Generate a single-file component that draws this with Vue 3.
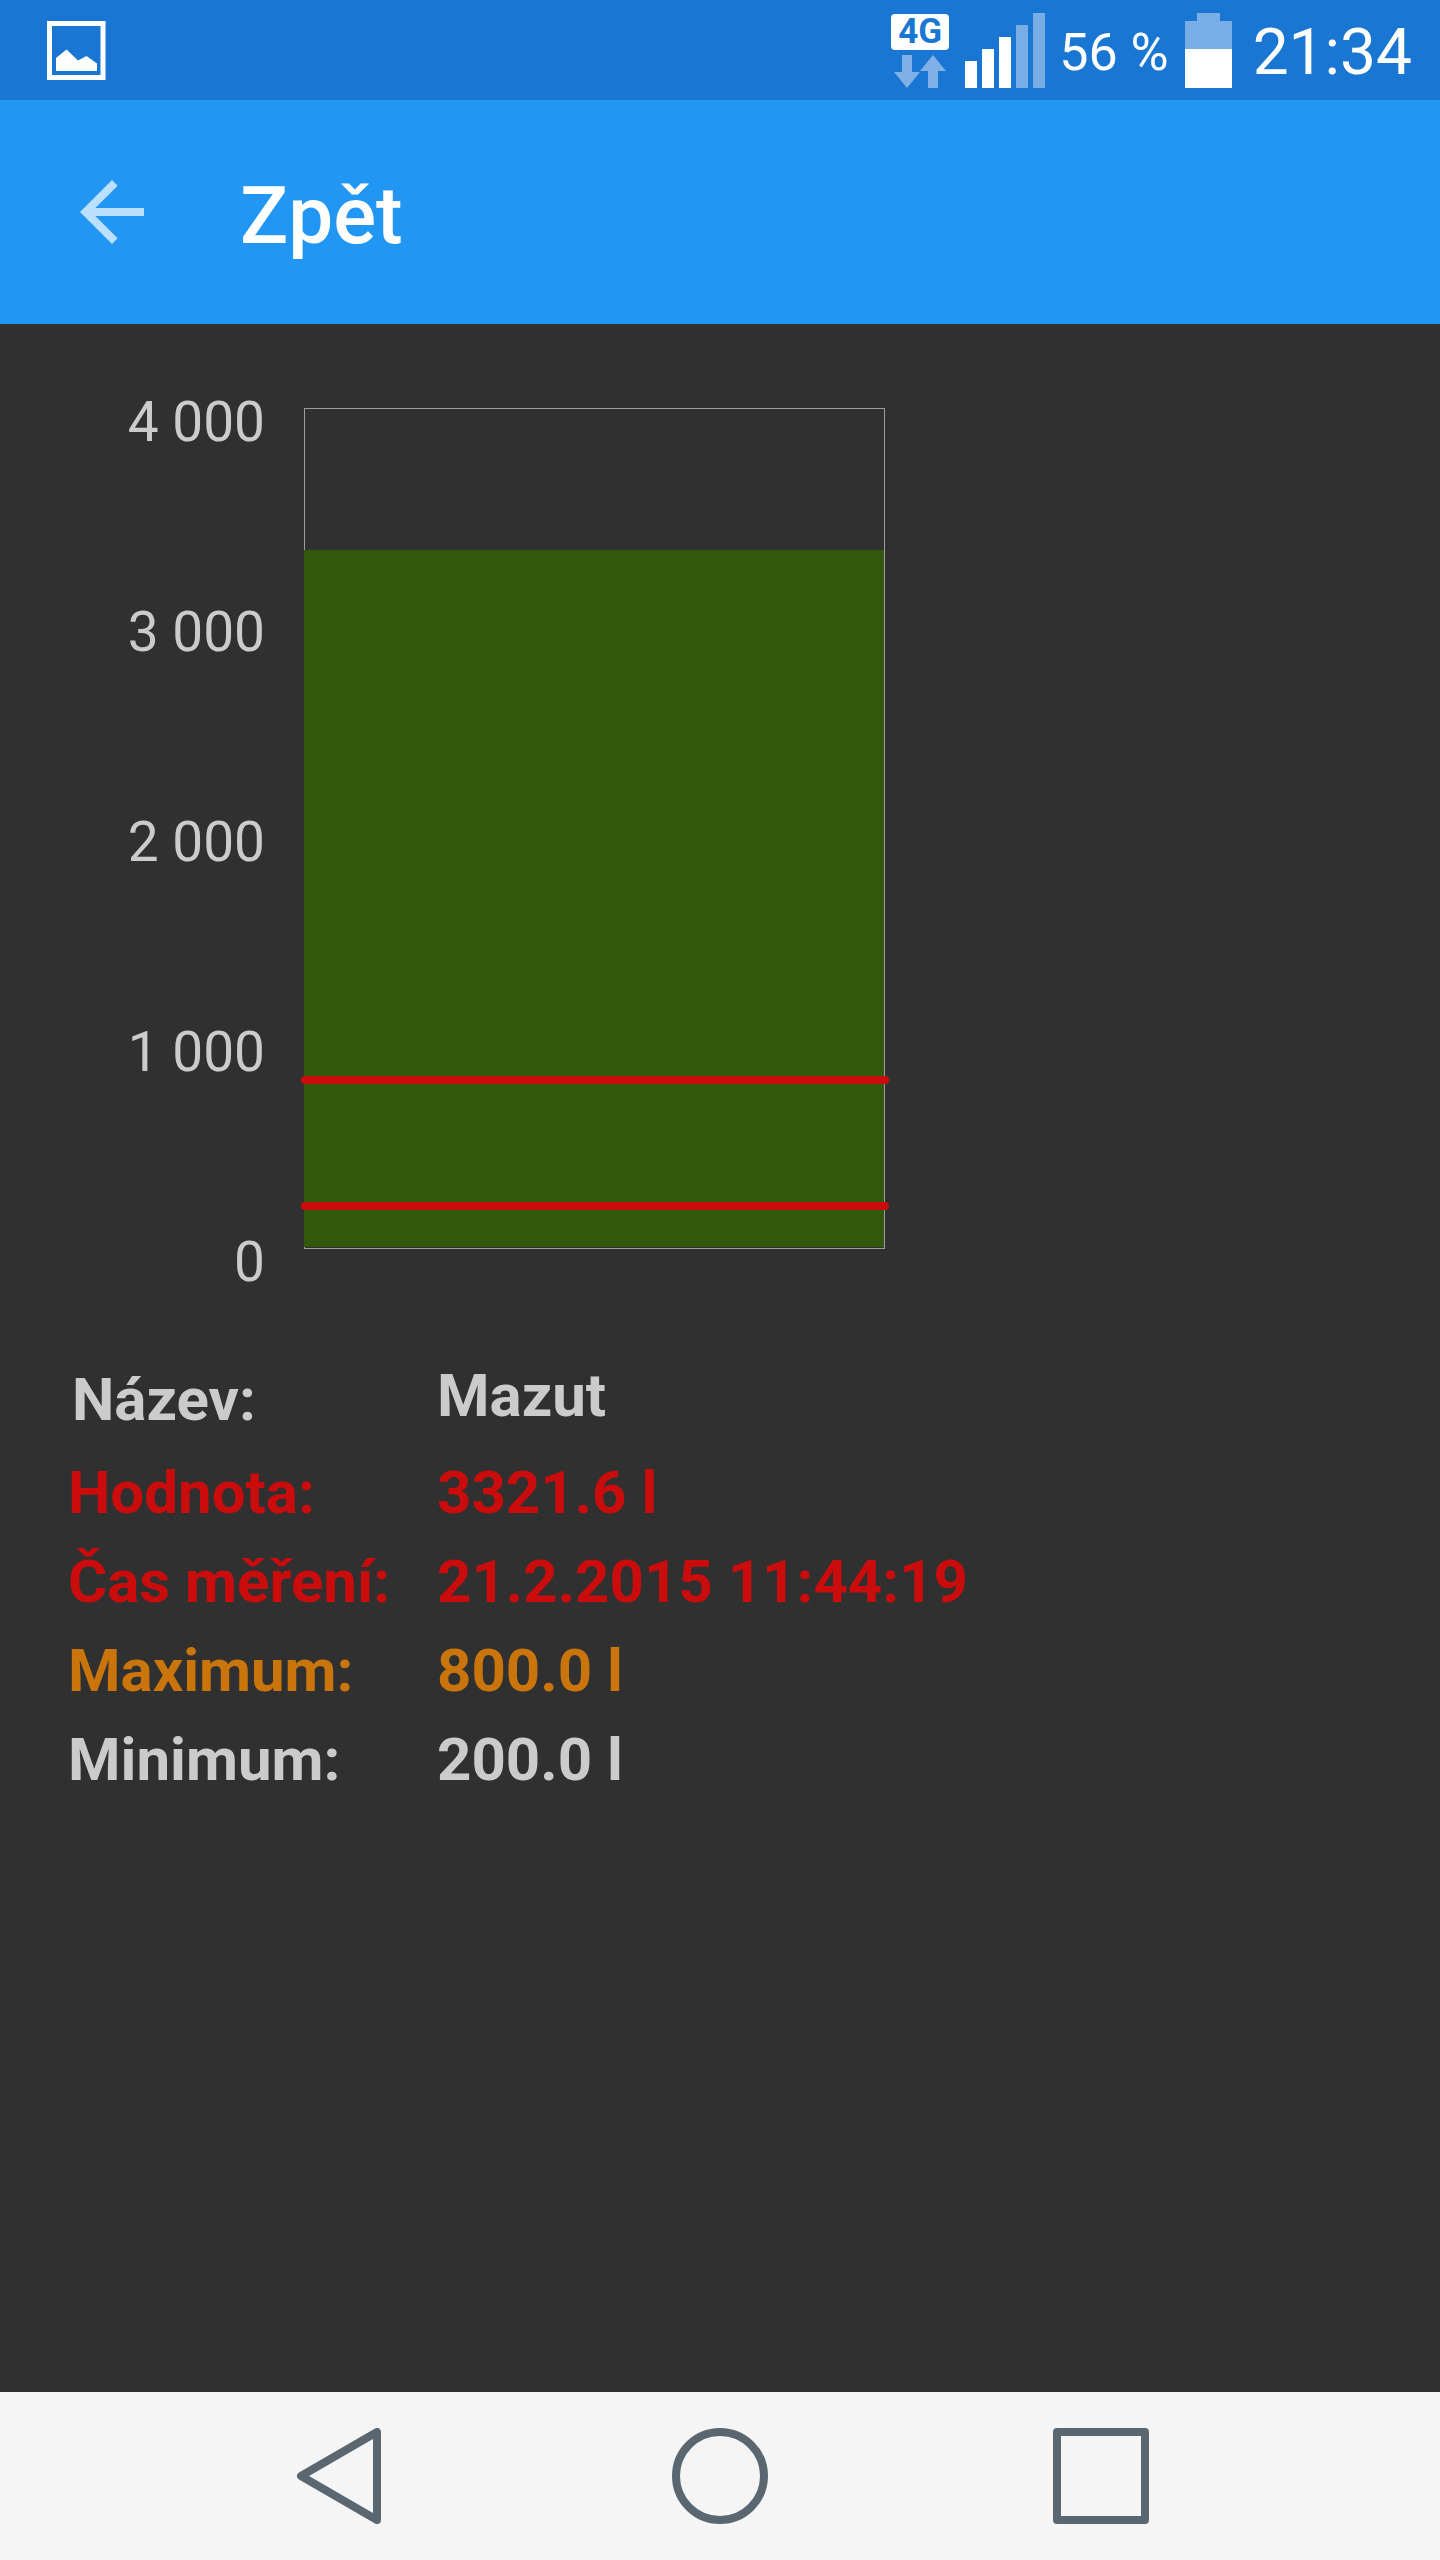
<script setup>
const scaleMax = 4000
const ticks = ['4 000', '3 000', '2 000', '1 000', '0']
const level = 3321.6
const limits = [800, 200]

const fromTop = (value) => `${(1 - value / scaleMax) * 100}%`

const rows = [
  { label: 'Název:', value: 'Mazut', tone: 'name' },
  { label: 'Hodnota:', value: '3321.6 l', tone: 'alert' },
  { label: 'Čas měření:', value: '21.2.2015 11:44:19', tone: 'alert' },
  { label: 'Maximum:', value: '800.0 l', tone: 'warn' },
  { label: 'Minimum:', value: '200.0 l', tone: 'plain' },
]
</script>

<template>
  <div class="screen">
    <div class="status">
      <svg class="picture" width="59" height="59" viewBox="0 0 59 59" aria-hidden="true">
        <path d="M2.5 2.5H56V56.5H2.5Z" fill="none" stroke="#fff" stroke-width="5" />
        <path d="M9 37L19.500 28.500L31 39.500L39.500 35L50 42.500V50H9Z" fill="#fff" />
      </svg>
      <div class="indicators">
        <div class="network">
          <span class="network-type">4G</span>
          <svg width="58" height="38" viewBox="0 0 58 38" aria-hidden="true">
            <path d="M11 5H21V22H29L16 38L3 22H11Z" fill="#7fb1e6" />
            <path d="M42 5L55 21H47V38H37V21H29Z" fill="#7fb1e6" />
          </svg>
        </div>
        <svg width="80" height="75" viewBox="0 0 80 75" aria-hidden="true">
          <path d="M0 48H12V75H0ZM17 36H29V75H17ZM34 24H46V75H34Z" fill="#fff" />
          <path d="M51 12H63V75H51ZM68 0H80V75H68Z" fill="#78ade5" />
        </svg>
        <span class="percent">56 %</span>
        <svg width="47" height="75" viewBox="0 0 47 75" aria-hidden="true">
          <path d="M12 0H35V8H47V36H0V8H12Z" fill="#78ade5" />
          <path d="M0 36H47V75H0Z" fill="#fff" />
        </svg>
        <time class="clock">21:34</time>
      </div>
    </div>

    <header class="toolbar">
      <button class="back" type="button" aria-label="Zpět">
        <svg width="96" height="96" viewBox="0 0 24 24" aria-hidden="true">
          <path d="M20 11H7.830L13.420 5.410L12 4L4 12L12 20L13.410 18.590L7.830 13H20Z" fill="#fff" fill-opacity="0.7" />
        </svg>
      </button>
      <h1>Zpět</h1>
    </header>

    <main>
      <div class="chart">
        <div class="axis">
          <span v-for="tick in ticks" :key="tick">{{ tick }}</span>
        </div>
        <div class="plot">
          <div class="fill" :style="{ top: `calc(${fromTop(level)} - 1px)` }"></div>
          <div v-for="limit in limits" :key="limit" class="limit" :style="{ top: fromTop(limit) }"></div>
        </div>
      </div>

      <table class="details">
        <tbody>
          <tr v-for="row in rows" :key="row.label" :class="row.tone">
            <th scope="row">{{ row.label }}</th>
            <td>{{ row.value }}</td>
          </tr>
        </tbody>
      </table>
    </main>

    <nav class="keys">
      <button type="button" aria-label="Zpět">
        <svg width="96" height="96" viewBox="0 0 96 96" aria-hidden="true">
          <path d="M86 4V92L10 48Z" />
        </svg>
      </button>
      <button type="button" aria-label="Domů">
        <svg width="96" height="96" viewBox="0 0 96 96" aria-hidden="true">
          <circle cx="48" cy="48" r="44" />
        </svg>
      </button>
      <button type="button" aria-label="Poslední aplikace">
        <svg width="96" height="96" viewBox="0 0 96 96" aria-hidden="true">
          <path d="M4 4H92V92H4Z" />
        </svg>
      </button>
    </nav>
  </div>
</template>

<style>
body {
  background: #303030;
}
</style>

<style scoped>
.screen {
  display: flex;
  flex-direction: column;
  min-height: 100vh;
  background: #303030;
  color: #cbcbcb;
  font-family: Roboto, "Noto Sans", sans-serif;
}

button {
  display: flex;
  align-items: center;
  justify-content: center;
  padding: 0;
  border: 0;
  background: none;
}

svg {
  display: block;
  flex: none;
}

.status {
  display: flex;
  align-items: center;
  justify-content: space-between;
  height: 100px;
  padding: 0 28px 0 47px;
  box-sizing: border-box;
  background: #1976d2;
  color: #fff;
}

.indicators {
  display: flex;
  align-items: center;
  gap: 16px;
  height: 75px;
}

.network-type {
  display: block;
  height: 36px;
  margin-top: 1px;
  border-radius: 4px;
  background: #fff;
  color: #1976d2;
  font-size: 35px;
  font-weight: 700;
  line-height: 36px;
  text-align: center;
}

.percent {
  margin-left: -2px;
  padding-top: 6px;
  font-size: 52px;
  line-height: 64px;
}

.clock {
  padding: 6px 0 0 5px;
  font-size: 64px;
  line-height: 64px;
}

.toolbar {
  display: flex;
  align-items: center;
  height: 224px;
  padding: 0 64px;
  box-sizing: border-box;
  background: #2196f3;
  color: #fff;
}

h1 {
  margin: 0 0 0 80px;
  padding-top: 8px;
  font-size: 80px;
  font-weight: 500;
  line-height: 96px;
}

main {
  flex: 1;
  padding: 66px 68px;
}

.chart {
  display: grid;
  grid-template-columns: 197px minmax(0, 581px);
  gap: 39px;
}

.axis {
  display: flex;
  flex-direction: column;
  justify-content: space-between;
  height: 904px;
  font-size: 55px;
  line-height: 64px;
  text-align: right;
}

.plot {
  position: relative;
  margin: 18px 0 45px;
  border: 1px solid #9c9c9c;
}

.fill {
  position: absolute;
  right: 0;
  bottom: 1px;
  left: -1px;
  background: #31580d;
}

.limit {
  position: absolute;
  right: -5px;
  left: -4px;
  height: 8px;
  margin-top: -4px;
  border-radius: 4px;
  background: #ca0c0c;
}

.details {
  margin-top: 57px;
  border-collapse: collapse;
  font-size: 60px;
  font-weight: 700;
  line-height: 89px;
  text-align: left;
}

th,
td {
  padding: 0;
  vertical-align: top;
}

th {
  width: 369px;
}

.name th {
  padding: 4px;
  box-sizing: border-box;
}

.alert {
  color: #ca0c0c;
}

.warn {
  color: #ca750c;
}

.keys {
  display: flex;
  justify-content: center;
  height: 168px;
  background: #f5f5f5;
}

.keys button {
  flex: 0 1 381px;
}

.keys svg {
  fill: none;
  stroke: #5b6770;
  stroke-width: 8;
  stroke-linejoin: round;
}
</style>
